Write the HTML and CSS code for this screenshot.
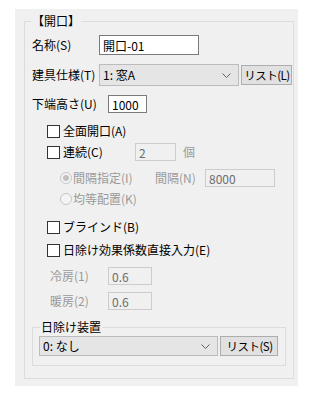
FILE: index.html
```html
<!DOCTYPE html>
<html lang="ja">
<head>
    <meta charset="UTF-8" />
    <title>開口</title>
    <link rel="stylesheet" href="styles.css">
</head>
<body>

<div class="panel">
    <div class="group">
        <div class="legend">【開口】</div>

        <div class="row row-name">
            <span class="label label-name">名称(S)</span>
            <input class="text input-name" value="開口-01">
        </div>

        <div class="row row-spec">
            <span class="label label-name">建具仕様(T)</span>
            <div class="select select-spec">
                <span>1: 窓A</span>
                <svg class="chevron" width="9" height="5" viewBox="0 0 9 5"><polyline points="0.5,0.5 4.5,4.5 8.5,0.5" fill="none" stroke="#606060" stroke-width="1"/></svg>
            </div>
            <button class="btn btn-spec">リスト(L)</button>
        </div>

        <div class="row row-height">
            <span class="label label-height">下端高さ(U)</span>
            <input class="text input-height" value="1000">
        </div>

        <div class="row check-row row-all">
            <span class="box"></span>
            <span>全面開口(A)</span>
        </div>

        <div class="row check-row row-cont">
            <span class="box"></span>
            <span class="label-cont">連続(C)</span>
            <input class="text input-cont" value="2" disabled>
            <span class="muted unit">個</span>
        </div>

        <div class="row radio-row row-interval">
            <span class="radio on"></span>
            <span class="muted label-interval">間隔指定(I)</span>
            <span class="muted label-gap">間隔(N)</span>
            <input class="text input-gap" value="8000" disabled>
        </div>

        <div class="row radio-row row-even">
            <span class="radio"></span>
            <span class="muted">均等配置(K)</span>
        </div>

        <div class="row check-row row-blind">
            <span class="box"></span>
            <span>ブラインド(B)</span>
        </div>

        <div class="row check-row row-shade">
            <span class="box"></span>
            <span>日除け効果係数直接入力(E)</span>
        </div>

        <div class="row sub-row row-cool">
            <span class="muted label-sub">冷房(1)</span>
            <input class="text input-sub" value="0.6" disabled>
        </div>

        <div class="row sub-row row-warm">
            <span class="muted label-sub">暖房(2)</span>
            <input class="text input-sub" value="0.6" disabled>
        </div>

        <div class="inner">
            <div class="legend legend-inner">日除け装置</div>
            <div class="row row-device">
                <div class="select select-device">
                    <span>0: なし</span>
                    <svg class="chevron" width="9" height="5" viewBox="0 0 9 5"><polyline points="0.5,0.5 4.5,4.5 8.5,0.5" fill="none" stroke="#606060" stroke-width="1"/></svg>
                </div>
                <button class="btn btn-device">リスト(S)</button>
            </div>
        </div>
    </div>
</div>

</body>
</html>
```

FILE: styles.css
```css
* {
    box-sizing: border-box;
}

body {
    margin: 0;
    background-color: #ffffff;
    font-family: "Noto Sans CJK JP", "DejaVu Sans", sans-serif;
    font-size: 12px;
    line-height: 16px;
    color: #000;
    white-space: nowrap;
}

.panel {
    margin: 9px 0 0 15px;
    width: 283px;
    height: 377px;
    background-color: #f0f0f0;
    padding: 12px 0 0 9px;
}

.group {
    position: relative;
    width: 270px;
    height: 358px;
    border: 1px solid #dcdcdc;
    padding: 13px 0 0 7px;
}

.legend {
    position: absolute;
    top: -9px;
    left: 6px;
    padding: 0 1px;
    background-color: #f0f0f0;
}

.row {
    display: flex;
    align-items: center;
}

.row > * {
    flex-shrink: 0;
}

.label-name {
    width: 67px;
}

.label-height {
    width: 76px;
}

.text {
    font: inherit;
    color: #000;
    background-color: #fff;
    border: 1px solid #7a7a7a;
    padding: 0 3px;
    margin: 0;
    outline: none;
}

.text:disabled {
    background-color: #f0f0f0;
    border-color: #cccccc;
    color: #6d6d6d;
}

.row-name {
    height: 20px;
}

.input-name {
    width: 100px;
    height: 20px;
}

.row-spec {
    margin-top: 9px;
    height: 22px;
}

.select {
    display: flex;
    align-items: center;
    justify-content: space-between;
    height: 22px;
    background-color: #e5e5e5;
    border: 1px solid #bcbcbc;
    padding: 0 7px 0 3px;
}

.select-spec {
    width: 140px;
}

.btn {
    font: inherit;
    font-size: 11.5px;
    color: #000;
    white-space: nowrap;
    letter-spacing: -0.5px;
    text-align: center;
    height: 20px;
    margin: 0 0 0 2px;
    padding: 0 0 0 1px;
    background-color: #e1e1e1;
    border: 1px solid #adadad;
}

.btn-spec {
    width: 51px;
}

.row-height {
    margin-top: 9px;
    height: 18px;
}

.input-height {
    width: 39px;
    height: 18px;
}

.check-row {
    height: 16px;
    padding-left: 15px;
}

.box {
    width: 13px;
    height: 13px;
    background-color: #fff;
    border: 1px solid #333;
    margin-right: 3px;
}

.row-all {
    margin-top: 10px;
}

.row-cont {
    margin-top: 4px;
    height: 18px;
}

.label-cont {
    width: 72px;
}

.input-cont {
    width: 41px;
    height: 18px;
}

.unit {
    margin-left: 7px;
}

.muted {
    color: #9a9a9a;
}

.radio-row {
    height: 18px;
    padding-left: 28px;
}

.radio {
    position: relative;
    width: 12px;
    height: 12px;
    border-radius: 50%;
    border: 1px solid #c6c6c6;
    background-color: #f4f4f4;
    margin-right: 1px;
}

.radio.on::after {
    content: "";
    position: absolute;
    left: 2px;
    top: 2px;
    width: 6px;
    height: 6px;
    border-radius: 50%;
    background-color: #c0c0c0;
}

.row-interval {
    margin-top: 8px;
}

.label-interval {
    width: 82px;
}

.label-gap {
    width: 50px;
}

.input-gap {
    width: 70px;
    height: 18px;
}

.row-even {
    margin-top: 4px;
    height: 16px;
}

.row-blind {
    margin-top: 12px;
}

.row-shade {
    margin-top: 7px;
}

.sub-row {
    height: 18px;
    padding-left: 18px;
}

.label-sub {
    width: 58px;
}

.input-sub {
    width: 44px;
    height: 18px;
}

.row-cool {
    margin-top: 9px;
}

.row-warm {
    margin-top: 7px;
}

.inner {
    position: relative;
    margin-top: 17px;
    width: 254px;
    height: 39px;
    border: 1px solid #dcdcdc;
    padding: 8px 0 0 6px;
}

.legend-inner {
    left: 7px;
}

.select-device {
    width: 179px;
    height: 20px;
}

.btn-device {
    width: 58px;
}
```
